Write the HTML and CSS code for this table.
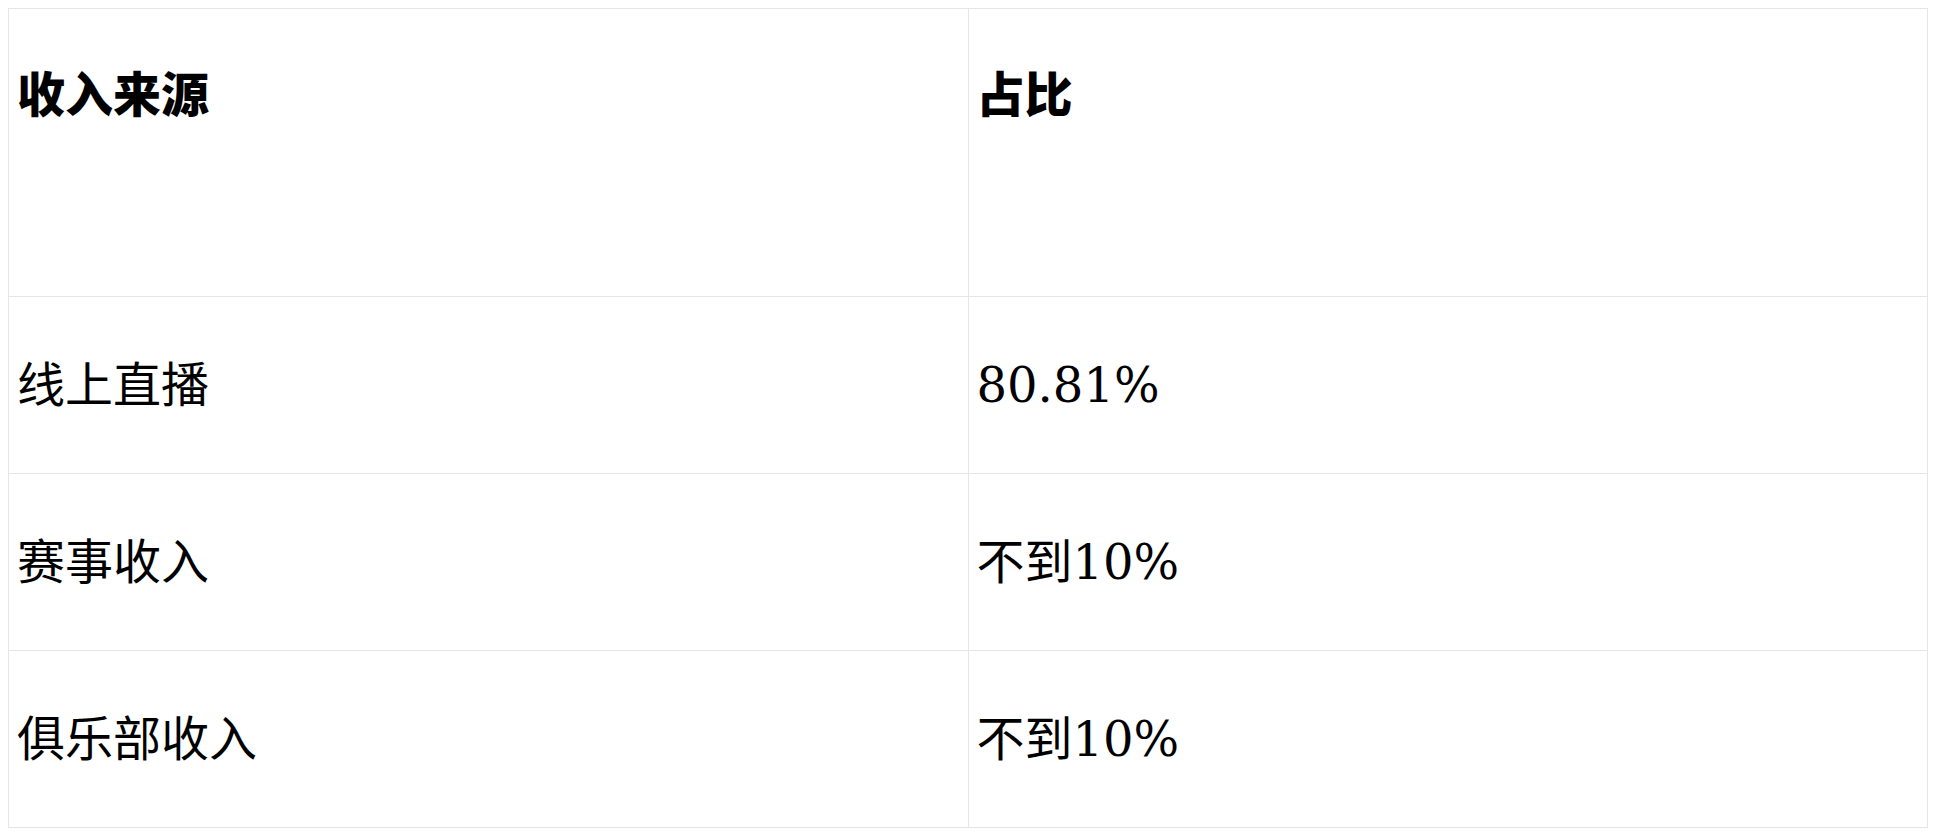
FILE: index.html
```html
<!DOCTYPE html>
<html lang="zh">
<head>
<meta charset="utf-8">
<title>收入来源</title>
<link rel="stylesheet" href="styles.css">
</head>
<body>
<table class="income">
  <thead>
    <tr class="head-row">
      <th>收入来源</th>
      <th>占比</th>
    </tr>
  </thead>
  <tbody>
    <tr class="row">
      <td>线上直播</td>
      <td>80.81%</td>
    </tr>
    <tr class="row">
      <td>赛事收入</td>
      <td>不到10%</td>
    </tr>
    <tr class="row">
      <td>俱乐部收入</td>
      <td>不到10%</td>
    </tr>
  </tbody>
</table>
</body>
</html>
```
FILE: styles.css
```css
html, body {
  background: #ffffff;
}
body {
  margin: 8px;
  font-family: "DejaVu Serif", "Noto Sans CJK SC", serif;
  color: #000000;
}
.income {
  width: 1920px;
  border-collapse: collapse;
  table-layout: fixed;
  font-size: 48px;
  line-height: 70px;
}
.income th,
.income td {
  border: 1px solid #e5e5ea;
  padding: 0 8px;
  text-align: left;
  width: 50%;
}
.income th {
  font-weight: 900;
  font-family: "Noto Sans CJK SC", sans-serif;
  vertical-align: top;
  padding-top: 47px;
  height: 240px;
}
.head-row {
  height: 288px;
}
.row {
  height: 177px;
}
.income td {
  vertical-align: middle;
}
```
